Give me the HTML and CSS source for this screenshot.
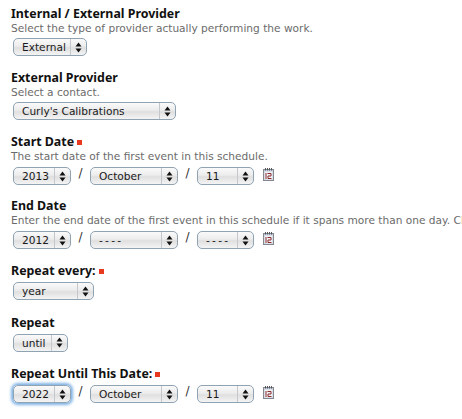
FILE: index.html
```html
<!DOCTYPE html>
<html lang="en">
<head>
    <meta charset="UTF-8">
    <meta name="viewport" content="width=device-width, initial-scale=1.0">
    <title>Schedule</title>
    <link rel="stylesheet" href="styles.css">
</head>
<body>
    <svg class="defs" width="0" height="0">
        <symbol id="arrows" viewBox="0 0 7 11">
            <path d="M3.5 0.5 L6.5 4.5 H0.5 Z M3.5 10.5 L6.5 6.5 H0.5 Z" fill="#111"/>
        </symbol>
        <symbol id="cal" viewBox="0 0 11 13">
            <rect x="0.5" y="1.5" width="10" height="11" fill="#c5cedd" stroke="#85888f"/>
            <rect x="1.5" y="3.5" width="8" height="8" fill="#eef1f6"/>
            <path d="M2.5 0v2.5M4.5 0v2.5M6.5 0v2.5M8.5 0v2.5" stroke="#55575d"/>
            <path d="M3 5v6M4.5 5.5H8V8H5V10.5H8.5" stroke="#8e2a2a" fill="none"/>
        </symbol>
    </svg>
    <div class="form">
        <div class="field">
            <div class="label">Internal / External Provider</div>
            <div class="help">Select the type of provider actually performing the work.</div>
            <div class="row">
                <div class="select w-type"><span class="value">External</span><span class="arrow"><svg><use href="#arrows"/></svg></span></div>
            </div>
        </div>
        <div class="field">
            <div class="label">External Provider</div>
            <div class="help">Select a contact.</div>
            <div class="row">
                <div class="select w-contact"><span class="value">Curly's Calibrations</span><span class="arrow"><svg><use href="#arrows"/></svg></span></div>
            </div>
        </div>
        <div class="field date">
            <div class="label">Start Date <span class="req"></span></div>
            <div class="help">The start date of the first event in this schedule.</div>
            <div class="row">
                <div class="select w-year"><span class="value">2013</span><span class="arrow"><svg><use href="#arrows"/></svg></span></div>
                <span class="slash">/</span>
                <div class="select w-month"><span class="value">October</span><span class="arrow"><svg><use href="#arrows"/></svg></span></div>
                <span class="slash">/</span>
                <div class="select w-day"><span class="value">11</span><span class="arrow"><svg><use href="#arrows"/></svg></span></div>
                <svg class="cal"><use href="#cal"/></svg>
            </div>
        </div>
        <div class="field date end">
            <div class="label">End Date</div>
            <div class="help">Enter the end date of the first event in this schedule if it spans more than one day. Clear</div>
            <div class="row">
                <div class="select w-year"><span class="value">2012</span><span class="arrow"><svg><use href="#arrows"/></svg></span></div>
                <span class="slash">/</span>
                <div class="select w-month"><span class="value dashes">----</span><span class="arrow"><svg><use href="#arrows"/></svg></span></div>
                <span class="slash">/</span>
                <div class="select w-day"><span class="value dashes">----</span><span class="arrow"><svg><use href="#arrows"/></svg></span></div>
                <svg class="cal"><use href="#cal"/></svg>
            </div>
        </div>
        <div class="field short">
            <div class="label">Repeat every: <span class="req"></span></div>
            <div class="row">
                <div class="select w-every"><span class="value">year</span><span class="arrow"><svg><use href="#arrows"/></svg></span></div>
            </div>
        </div>
        <div class="field short">
            <div class="label">Repeat</div>
            <div class="row">
                <div class="select w-until"><span class="value">until</span><span class="arrow"><svg><use href="#arrows"/></svg></span></div>
            </div>
        </div>
        <div class="field short">
            <div class="label">Repeat Until This Date: <span class="req"></span></div>
            <div class="row">
                <div class="select w-year focus"><span class="value">2022</span><span class="arrow"><svg><use href="#arrows"/></svg></span></div>
                <span class="slash">/</span>
                <div class="select w-month"><span class="value">October</span><span class="arrow"><svg><use href="#arrows"/></svg></span></div>
                <span class="slash">/</span>
                <div class="select w-day"><span class="value">11</span><span class="arrow"><svg><use href="#arrows"/></svg></span></div>
                <svg class="cal"><use href="#cal"/></svg>
            </div>
        </div>
    </div>
</body>
</html>
```

FILE: styles.css
```css
html, body {
    height: 100%;
    overflow: hidden;
}
body {
    margin: 0;
    background-color: #fff;
    font-family: "DejaVu Sans", sans-serif;
    color: #111;
}
.defs {
    position: absolute;
}
.form {
    padding: 6px 0 0 11px;
    white-space: nowrap;
}
.field {
    height: 64px;
}
.field.end {
    height: 65px;
}
.field.short {
    height: 51.5px;
}
.label {
    height: 15px;
    line-height: 15px;
    font-family: "Noto Sans", sans-serif;
    font-size: 12.4px;
    font-weight: bold;
    display: flex;
    align-items: center;
    gap: 3px;
}
.req {
    width: 5px;
    height: 5px;
    margin-top: 1px;
    background-color: #e8391f;
}
.help {
    height: 14px;
    line-height: 15px;
    font-size: 10.6px;
    color: #6b6b6b;
}
.row {
    display: flex;
    align-items: flex-start;
    margin-top: 3px;
    padding-left: 2px;
}
.date .row,
.short .row {
    margin-top: 4px;
}
.select {
    box-sizing: border-box;
    height: 18px;
    display: flex;
    border: 1px solid #8fa3b3;
    border-radius: 5px;
    background: linear-gradient(#fafafa, #ececec 45%, #dfdfdf 55%, #f4f4f4);
    font-size: 10.6px;
    line-height: 16px;
    color: #1a1a1a;
}
.select.focus {
    box-shadow: 0 0 3px 2px #7fb2e5;
}
.value {
    flex: 1;
    padding-left: 8px;
}
.value.dashes {
    letter-spacing: 2.3px;
}
.arrow {
    width: 15px;
    border-left: 1px solid #c4c8cc;
    display: flex;
    align-items: center;
    justify-content: center;
}
.arrow svg {
    width: 7px;
    height: 11px;
}
.slash {
    width: 19px;
    text-align: center;
    font-size: 12px;
    line-height: 13px;
    color: #333;
}
.cal {
    width: 11px;
    height: 13px;
    margin: 1px 0 0 9px;
}
.w-type { width: 74px; }
.w-contact { width: 163px; }
.w-year { width: 58px; }
.w-month { width: 88px; }
.w-day { width: 57px; }
.w-every { width: 81px; }
.w-until { width: 55px; }
```
